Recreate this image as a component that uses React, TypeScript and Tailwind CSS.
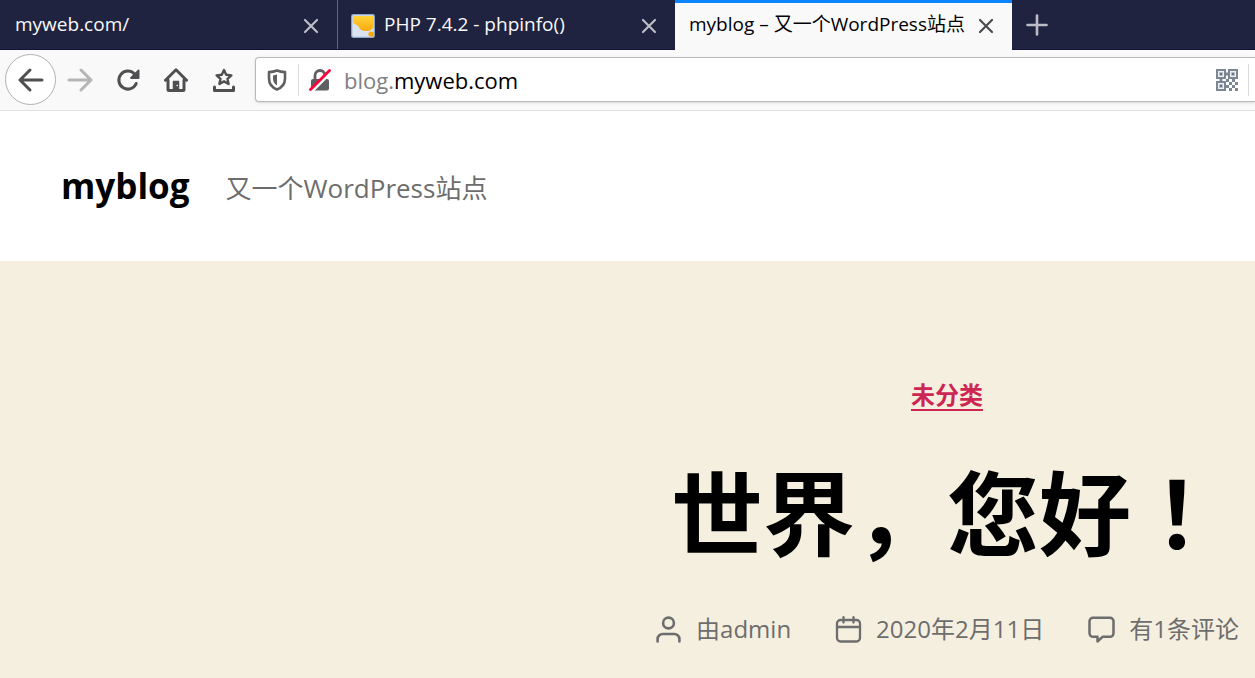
import type { ReactNode } from "react";

type TabProps = { title: string; active?: boolean; icon?: ReactNode };

function CloseIcon() {
  return (
    <svg className="size-4" viewBox="0 0 16 16" fill="none" stroke="currentColor" strokeWidth="2.2" strokeLinecap="round" aria-hidden="true">
      <path d="M2 2l12 12M14 2L2 14" />
    </svg>
  );
}

function Tab({ title, active, icon }: TabProps) {
  return (
    <div
      className={
        active
          ? "-mb-px flex w-[337px] shrink-0 items-center border-t-3 border-[#0a84ff] bg-[#f9f9fa] pr-[18px] pb-1 pl-[14px] text-black"
          : "flex w-[338px] shrink-0 items-center border-r border-[#64657a] pr-[18px] pl-[15px] text-[#f9f9fa] nth-2:w-[337px] nth-2:border-r-0 nth-2:pl-[13px]"
      }
    >
      {icon}
      <button type="button" className="min-w-0 flex-1 truncate pb-[2px] text-left text-[19px] leading-7">
        {title}
      </button>
      <button type="button" aria-label="Close tab" className={active ? "mt-[3px] text-[#4a4a4f]" : "mt-[3px] text-[#bcbcc6]"}>
        <CloseIcon />
      </button>
    </div>
  );
}

function PhpIcon() {
  return (
    <svg className="mt-[2px] mr-[9px] size-6 shrink-0" viewBox="0 0 24 24" aria-hidden="true">
      <defs>
        <linearGradient id="gold" x1="0" y1="0" x2="0" y2="1">
          <stop offset="0" stopColor="#ffd43a" />
          <stop offset="1" stopColor="#f9a90c" />
        </linearGradient>
      </defs>
      <rect x="0.7" y="0.7" width="22.6" height="22.6" rx="1.5" fill="#dbe3f0" stroke="#8fa9cb" strokeWidth="1.2" />
      <path d="M2 2h20.500v9c0 4-3 6-7.500 6-4 0-6-1.500-7.500-4.500C6 10 2.500 11 2 7z" fill="url(#gold)" />
      <circle cx="20" cy="20" r="2.600" fill="#f9a90c" />
      <path d="M20 18h2.600v4.600H20z" fill="#f9a90c" />
    </svg>
  );
}

function BackIcon() {
  return (
    <svg className="size-7" viewBox="0 0 28 28" fill="none" stroke="#4f4f52" strokeWidth="3" strokeLinecap="round" strokeLinejoin="round" aria-hidden="true">
      <path d="M25 14H3M13 4L3 14l10 10" />
    </svg>
  );
}

function ForwardIcon() {
  return (
    <svg className="size-7" viewBox="0 0 28 28" fill="none" stroke="#b5b5b6" strokeWidth="3" strokeLinecap="round" strokeLinejoin="round" aria-hidden="true">
      <path d="M3 14h21M15 4l10 10-10 10" />
    </svg>
  );
}

function ReloadIcon() {
  return (
    <svg className="size-6" viewBox="0 0 24 24" fill="none" aria-hidden="true">
      <path d="M20.200 15.500A9 9 0 1 1 18.500 6" stroke="#4f4f52" strokeWidth="3" strokeLinecap="round" />
      <path d="M22 1.800a1 1 0 0 1 1.500.8V10a1 1 0 0 1-1 1H15a1 1 0 0 1-.6-1.700z" fill="#4f4f52" />
    </svg>
  );
}

function HomeIcon() {
  return (
    <svg className="size-6" viewBox="0 0 24 24" fill="none" stroke="#4f4f52" strokeLinecap="round" strokeLinejoin="round" aria-hidden="true">
      <path d="M1.500 12.200L12 1.800l10.500 10.400" strokeWidth="3" />
      <path d="M4 12v9.500c0 .6.400 1 1 1h14c.6 0 1-.4 1-1V12" strokeWidth="3" />
      <path d="M9.500 21v-7.500h5V21z" fill="#4f4f52" strokeWidth="1.500" />
      <circle cx="13.200" cy="17.500" r=".8" fill="#f9f9fa" stroke="none" />
    </svg>
  );
}

function BookmarksIcon() {
  return (
    <svg className="size-6" viewBox="0 0 24 24" fill="none" stroke="#4f4f52" strokeLinecap="round" strokeLinejoin="round" aria-hidden="true">
      <path d="M12 2l2.200 4.800 5.200.6-3.900 3.500 1.100 5.100-4.600-2.600L7.400 16l1.100-5.100-3.900-3.500 5.200-.6z" strokeWidth="2.400" />
      <path d="M2.500 19v3.500h19V19" strokeWidth="3" />
    </svg>
  );
}

function ShieldIcon() {
  return (
    <svg className="size-[22px]" viewBox="0 0 22 22" fill="none" aria-hidden="true">
      <path d="M11 1.500c2.500 1 5 1.500 8 1.600v6.400c0 5-3 9-8 11-5-2-8-6-8-11V3.100c3-.1 5.500-.6 8-1.600z" stroke="#5f5f62" strokeWidth="2.600" strokeLinejoin="round" />
      <path d="M11 5.500v11C8.300 14.800 7 12.500 7 9.500V6.400c1.500-.1 2.700-.4 4-.9z" fill="#5f5f62" />
    </svg>
  );
}

function InsecureLockIcon() {
  return (
    <svg className="size-[22px]" viewBox="0 0 22 22" fill="none" aria-hidden="true">
      <path d="M6 11V6.500a5 5 0 0 1 10 0V11" stroke="#5f5f62" strokeWidth="2.800" />
      <rect x="2" y="10" width="18" height="11.500" rx="2" fill="#5f5f62" />
      <path d="M2.500 23L23 2.500" stroke="#fff" strokeWidth="2.600" />
      <path d="M1.500 20.500L20.500 1.500" stroke="#ff0039" strokeWidth="2.800" strokeLinecap="round" />
    </svg>
  );
}

function QrIcon() {
  return (
    <svg className="size-[22px]" viewBox="0 0 22 22" fill="none" stroke="#7d8794" aria-hidden="true">
      <path d="M1 1h8v8H1zM13 1h8v8h-8zM1 13h8v8H1z" strokeWidth="2" fill="#eef1f4" />
      <path d="M3.500 3.500h3v3h-3zM15.500 3.500h3v3h-3zM3.500 15.500h3v3h-3z" fill="#6b7480" stroke="#b4bcc6" strokeWidth="1" />
      <path d="M9 5h4M5 9v4" strokeWidth="3" />
      <path d="M10 10h3v3h-3zM13 13h3v3h-3zM16 10h3v3h-3zM19 13h3v3h-3zM10 16h3v3h-3zM16 16h3v3h-3zM13 19h3v3h-3zM19 19h3v3h-3z" fill="#7d8794" stroke="none" />
    </svg>
  );
}

function AuthorIcon() {
  return (
    <svg className="size-[27px]" viewBox="0 0 27 27" fill="none" stroke="#6d6d6d" strokeWidth="2.600" strokeLinecap="round" aria-hidden="true">
      <circle cx="13.500" cy="7" r="5.400" />
      <path d="M2.600 25.500V23a5 5 0 0 1 5-5h11.800a5 5 0 0 1 5 5v2.500" />
    </svg>
  );
}

function CalendarIcon() {
  return (
    <svg className="size-[27px]" viewBox="0 0 27 27" fill="none" stroke="#6d6d6d" strokeWidth="2.300" strokeLinecap="round" aria-hidden="true">
      <rect x="2" y="4" width="23" height="21.500" rx="3.500" />
      <path d="M2 11h23M8.500 1.200v5.300M18.500 1.200v5.300" />
    </svg>
  );
}

function CommentIcon() {
  return (
    <svg className="size-[27px]" viewBox="0 0 27 27" fill="none" stroke="#6d6d6d" strokeWidth="2.500" strokeLinejoin="round" aria-hidden="true">
      <path d="M5 1.800h17a3.500 3.500 0 0 1 3.500 3.500v12a3.500 3.500 0 0 1-3.500 3.500h-7.500L9.500 25.500v-4.700H5a3.500 3.500 0 0 1-3.500-3.500v-12A3.500 3.500 0 0 1 5 1.800z" />
    </svg>
  );
}

function MetaItem({ icon, text }: { icon: ReactNode; text: string }) {
  return (
    <li className="flex items-center gap-[14px]">
      {icon}
      <a href="#post" className="text-2xl leading-8 whitespace-nowrap">{text}</a>
    </li>
  );
}

export default function App() {
  return (
    <div className="min-h-screen overflow-hidden bg-[#f5efe0] font-['Open_Sans','Noto_Sans_CJK_SC',sans-serif]">
      <nav aria-label="Tabs" className="flex h-[50px] border-b border-[#14143a] bg-[#202340]">
        <Tab title="myweb.com/" />
        <Tab title="PHP 7.4.2 - phpinfo()" icon={<PhpIcon />} />
        <Tab title="myblog – 又一个WordPress站点" active />
        <button type="button" aria-label="New tab" className="ml-[14px] text-[#bcbcc6]">
          <svg className="size-[22px]" viewBox="0 0 22 22" fill="none" stroke="currentColor" strokeWidth="2.600" strokeLinecap="round" aria-hidden="true">
            <path d="M11 1.500v19M1.500 11h19" />
          </svg>
        </button>
      </nav>

      <div className="flex h-[61px] items-center border-b border-[#e0e0e1] bg-[#f9f9fa] pb-px pl-[5px]">
        <button type="button" aria-label="Back" className="flex size-[51px] items-center justify-center rounded-full border border-[#b1b1b3] bg-white">
          <BackIcon />
        </button>
        <div className="flex items-center gap-6 pl-[10px]">
          <button type="button" aria-label="Forward"><ForwardIcon /></button>
          <button type="button" aria-label="Reload" className="-ml-[2px]"><ReloadIcon /></button>
          <button type="button" aria-label="Home"><HomeIcon /></button>
          <button type="button" aria-label="Bookmarks"><BookmarksIcon /></button>
        </div>
        <div className="ml-[19px] flex h-[45px] flex-1 items-center rounded-l-sm border border-r-0 border-[#b9b9bb] bg-white shadow-sm">
          <button type="button" aria-label="Tracking protection" className="ml-[10px]"><ShieldIcon /></button>
          <span className="mr-[10px] ml-[10px] h-8 w-px bg-[#dcdcdd]" />
          <button type="button" aria-label="Connection security"><InsecureLockIcon /></button>
          <label htmlFor="address" className="ml-[13px] text-[22px] leading-8 text-[#808080]">blog.</label>
          <input id="address" type="text" defaultValue="myweb.com" className="min-w-0 flex-1 bg-transparent text-[22px] leading-8 text-black outline-none" />
          <button type="button" aria-label="QR code"><QrIcon /></button>
          <span className="mr-[6px] ml-[10px] h-8 w-px bg-[#dcdcdd]" />
        </div>
      </div>

      <header className="flex h-[150px] items-center bg-white pl-[61px]">
        <a href="#home" className="text-[35px] leading-[48px] font-bold text-black">myblog</a>
        <p className="ml-9 pt-1 text-[26px] leading-9 text-[#6d6d6d]">又一个WordPress站点</p>
      </header>

      <main className="flex flex-col items-center pt-[119px] pl-[639px]">
        <a href="#category" className="border-b-2 border-[#cd2653] text-2xl leading-[29px] font-bold text-[#cd2653]">未分类</a>
        <h1 className="mt-[30px] text-[92px] leading-[136px] font-bold whitespace-nowrap text-black">
          世界，您好<span className="font-['Noto_Sans_CJK_JP',sans-serif]" lang="ja">！</span>
        </h1>
        <ul className="mt-[31px] flex gap-11 text-[#6d6d6d]">
          <MetaItem icon={<AuthorIcon />} text="由admin" />
          <MetaItem icon={<CalendarIcon />} text="2020年2月11日" />
          <MetaItem icon={<CommentIcon />} text="有1条评论" />
        </ul>
      </main>
    </div>
  );
}
